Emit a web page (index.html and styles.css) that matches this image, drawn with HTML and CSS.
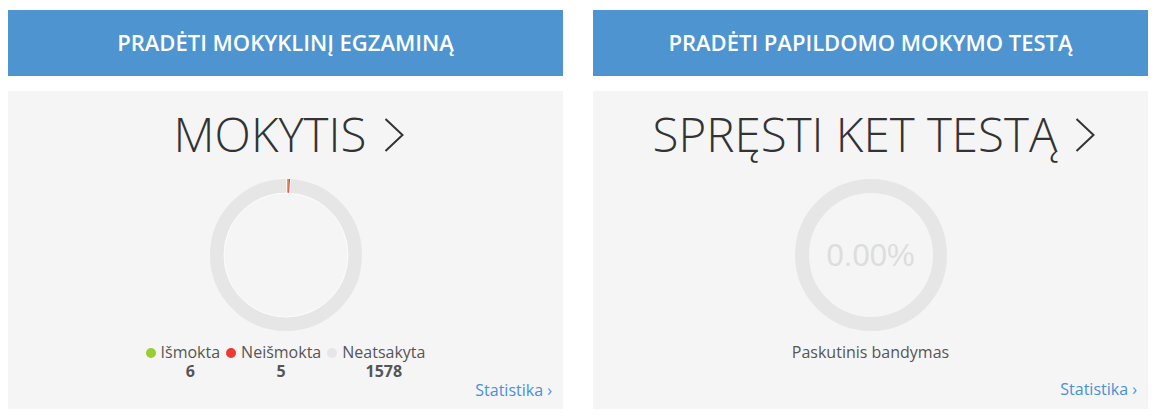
FILE: index.html
```html
<!DOCTYPE html>
<html lang="lt">
<head>
<meta charset="utf-8">
<title>Mokymas</title>
<link rel="stylesheet" href="styles.css">
</head>
<body>
<div class="row">
  <section class="col">
    <a class="start-btn" href="#">PRADĖTI MOKYKLINĮ EGZAMINĄ</a>
    <div class="panel">
      <h2 class="panel-title">MOKYTIS<svg class="chev" viewBox="0 0 20 34" width="20" height="34"><path d="M1.5 1 L18.5 17 L1.5 33" fill="none" stroke="#333" stroke-width="2"/></svg></h2>
      <div class="donut">
        <svg viewBox="0 0 152 152" width="152" height="152">
          <circle cx="76" cy="76" r="69" fill="none" stroke="#e6e6e6" stroke-width="14"/>
          <g transform="rotate(-90 76 76)">
            <circle cx="76" cy="76" r="69" fill="none" stroke="#9acd32" stroke-width="14" stroke-dasharray="1.6 433" stroke-dashoffset="-0.8"/>
            <circle cx="76" cy="76" r="69" fill="none" stroke="#ee3a33" stroke-width="14" stroke-dasharray="1.4 433" stroke-dashoffset="-2.4"/>
            <circle cx="76" cy="76" r="69" fill="none" stroke="#ffffff" stroke-width="14" stroke-dasharray="0.8 433" stroke-dashoffset="0"/>
            <circle cx="76" cy="76" r="69" fill="none" stroke="#ffffff" stroke-width="14" stroke-dasharray="0.8 433" stroke-dashoffset="-3.8"/>
          </g>
          <circle cx="76" cy="76" r="62" fill="none" stroke="#ffffff" stroke-width="0.8"/>
        </svg>
      </div>
      <ul class="legend">
        <li class="legend-item"><span class="dot dot-green"></span><span class="legend-text"><span class="legend-label">Išmokta</span><b class="legend-num">6</b></span></li>
        <li class="legend-item"><span class="dot dot-red"></span><span class="legend-text"><span class="legend-label">Neišmokta</span><b class="legend-num">5</b></span></li>
        <li class="legend-item"><span class="dot dot-grey"></span><span class="legend-text"><span class="legend-label">Neatsakyta</span><b class="legend-num">1578</b></span></li>
      </ul>
      <a class="stats-link" href="#">Statistika ›</a>
    </div>
  </section>
  <section class="col">
    <a class="start-btn" href="#">PRADĖTI PAPILDOMO MOKYMO TESTĄ</a>
    <div class="panel">
      <h2 class="panel-title">SPRĘSTI KET TESTĄ<svg class="chev" viewBox="0 0 20 34" width="20" height="34"><path d="M1.5 1 L18.5 17 L1.5 33" fill="none" stroke="#333" stroke-width="2"/></svg></h2>
      <div class="donut donut-score">
        <svg viewBox="0 0 152 152" width="152" height="152">
          <circle cx="76" cy="76" r="69" fill="none" stroke="#e6e6e6" stroke-width="14"/>
        </svg>
        <span class="score">0.00%</span>
      </div>
      <p class="last-try">Paskutinis bandymas</p>
      <a class="stats-link" href="#">Statistika ›</a>
    </div>
  </section>
</div>
</body>
</html>
```

FILE: styles.css
```css
* { box-sizing: border-box; }

html, body {
  margin: 0;
  padding: 0;
  background: #ffffff;
}

body {
  font-family: "Open Sans", "Liberation Sans", sans-serif;
  color: #555555;
}

.row {
  display: flex;
  gap: 30px;
  padding: 10px 0 0 8px;
}

.col {
  width: 555px;
  display: flex;
  flex-direction: column;
}

.start-btn {
  display: flex;
  align-items: center;
  justify-content: center;
  height: 66px;
  background: #4d94d0;
  color: #ffffff;
  text-decoration: none;
  font-size: 22px;
  font-weight: 600;
  padding-bottom: 2px;
}

.panel {
  margin-top: 15px;
  height: 318px;
  background: #f5f5f5;
  display: flex;
  flex-direction: column;
  align-items: center;
  padding: 14px 11px 10px;
}

.panel-title {
  margin: 0;
  padding-left: 7px;
  font-size: 47.5px;
  line-height: 58px;
  font-weight: 300;
  color: #333333;
  display: flex;
  align-items: center;
  letter-spacing: 0;
}

.chev {
  margin-left: 18px;
  margin-top: 2px;
  display: block;
}

.donut {
  margin-top: 16px;
  width: 152px;
  height: 152px;
  position: relative;
}

.donut svg { display: block; }

.score {
  position: absolute;
  left: 0;
  right: 0;
  top: 0;
  bottom: 0;
  display: flex;
  align-items: center;
  justify-content: center;
  font-family: "Liberation Sans", Arial, sans-serif;
  font-size: 31px;
  color: #dddddd;
  padding-top: 2px;
}

.legend {
  list-style: none;
  margin: 12px 0 0;
  padding: 0;
  display: flex;
  gap: 6px;
}

.legend-item {
  display: flex;
  align-items: flex-start;
}

.dot {
  width: 10px;
  height: 10px;
  border-radius: 50%;
  margin: 5px 5px 0 0;
}

.dot-green { background: #9acd32; }
.dot-red { background: #ee3a33; }
.dot-grey { background: #e6e6e6; }

.legend-text {
  display: flex;
  flex-direction: column;
  align-items: center;
}

.legend-label {
  font-size: 16px;
  line-height: 18px;
  color: #555555;
}

.legend-num {
  margin-top: 1px;
  font-size: 16px;
  line-height: 18px;
  font-weight: 700;
  color: #555555;
}

.last-try {
  margin: 11px 0 0;
  font-size: 16px;
  line-height: 20px;
  color: #555555;
}

.stats-link {
  margin-top: auto;
  align-self: flex-end;
  font-size: 16px;
  line-height: 20px;
  color: #4a90d9;
  text-decoration: none;
}
```
